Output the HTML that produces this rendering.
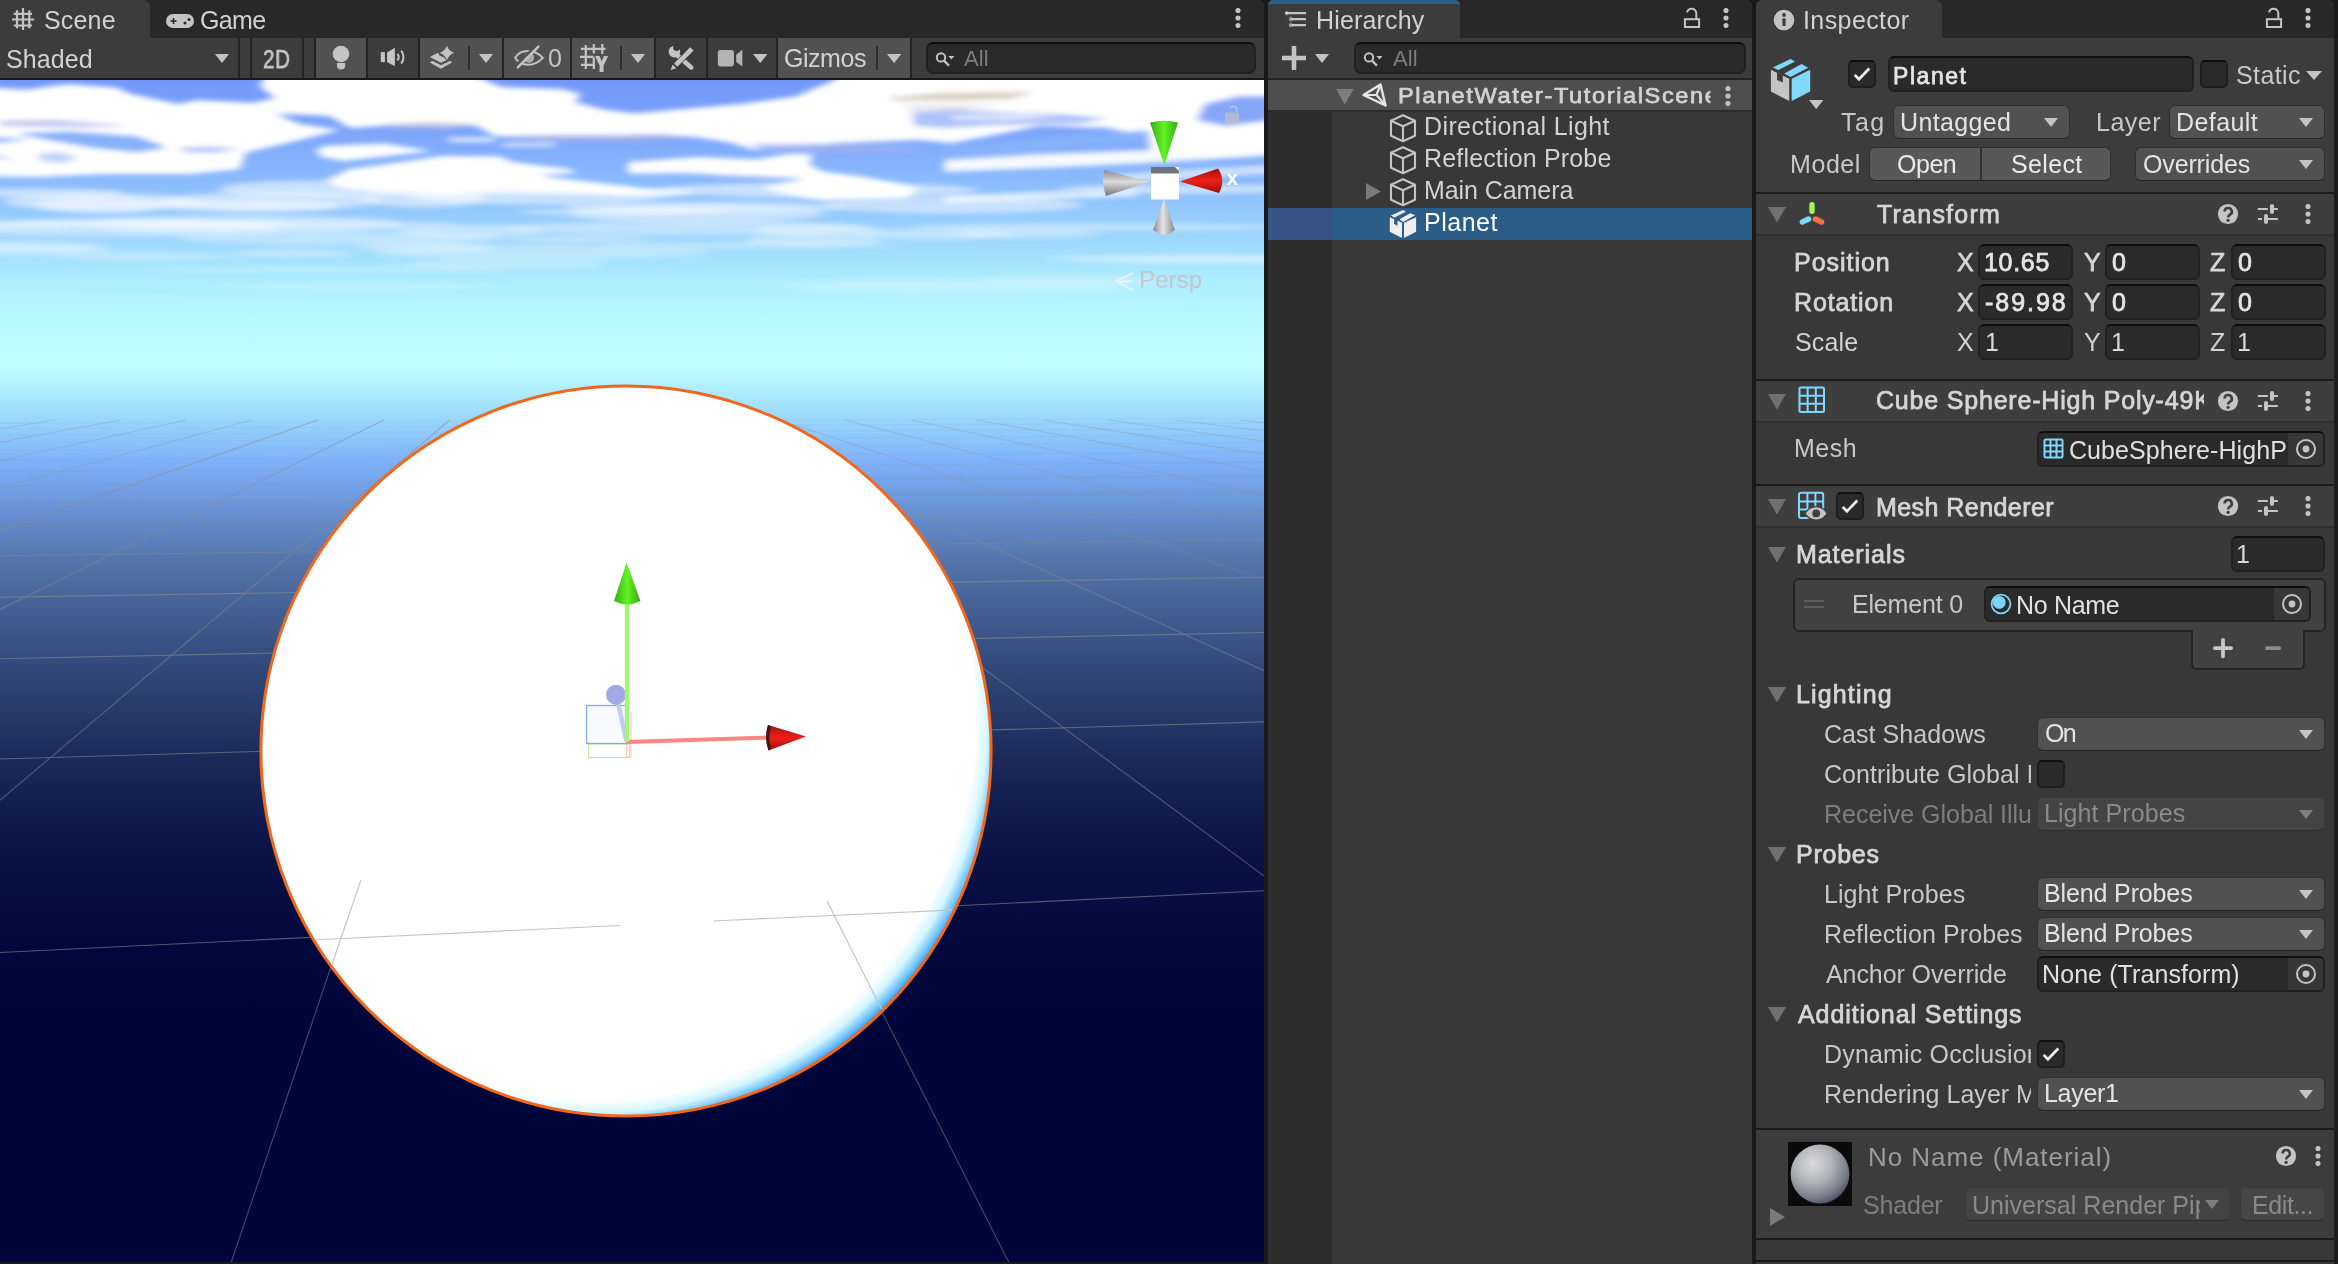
<!DOCTYPE html>
<html><head><meta charset="utf-8"><title>Unity</title>
<style>
html,body{margin:0;padding:0}
body{width:2338px;height:1264px;background:#191919;position:relative;overflow:hidden;font-family:"Liberation Sans",sans-serif;font-size:24px;color:#d2d2d2}
div,span,svg{position:absolute;display:block}
span{white-space:nowrap;will-change:transform}
</style></head><body>
<div style="left:0px;top:0px;width:1264px;height:38px;background:#282828;border-radius:0 5px 0 0;"></div>
<div style="left:0px;top:0px;width:150px;height:38px;background:#3c3c3c;border-top-right-radius:7px;"></div>
<svg style="left:10px;top:6px;" width="26" height="26" viewBox="0 0 26 26"><g stroke="#c4c4c4" stroke-width="2.2"><path d="M7 4.3V22.3M13 1.9V24M19.3 4.3V22.3M3.7 7.8H22M2 13.5H24.2M3.7 19.5H22"/></g></svg>
<span style="left:44.30px;top:5px;line-height:31px;font-size:25px;color:#d2d2d2;letter-spacing:0.175px;">Scene</span>
<svg style="left:164px;top:12px;" width="32" height="18" viewBox="0 0 32 18"><rect x="2" y="2" width="28" height="14" rx="7" fill="#c4c4c4"/><path d="M6.5 9H12.5M9.5 6V12" stroke="#282828" stroke-width="1.6"/><circle cx="21" cy="11" r="1.5" fill="#282828"/><circle cx="25" cy="7.5" r="1.5" fill="#282828"/></svg>
<span style="left:199.75px;top:5px;line-height:31px;font-size:25px;color:#d2d2d2;letter-spacing:-0.667px;">Game</span>
<svg style="left:1234px;top:8px;" width="8" height="20" viewBox="0 0 8 20"><circle cx="4" cy="2.5" r="2.55" fill="#c4c4c4"/><circle cx="4" cy="10.0" r="2.55" fill="#c4c4c4"/><circle cx="4" cy="17.5" r="2.55" fill="#c4c4c4"/></svg>
<div style="left:0px;top:38px;width:1264px;height:40px;background:#3c3c3c;"></div>
<div style="left:0px;top:78px;width:1264px;height:2px;background:#191919;"></div>
<span style="left:6.30px;top:44px;line-height:31px;font-size:25px;color:#d2d2d2;letter-spacing:0.090px;">Shaded</span>
<svg style="left:215.0px;top:54.0px;" width="14" height="9" viewBox="0 0 14 9"><path d="M0 0H14L7.0 9Z" fill="#c4c4c4"/></svg>
<div style="left:238px;top:38px;width:2px;height:40px;background:#232323;"></div>
<div style="left:250px;top:38px;width:2px;height:40px;background:#232323;"></div>
<div style="left:302px;top:38px;width:2px;height:40px;background:#232323;"></div>
<div style="left:314px;top:38px;width:2px;height:40px;background:#232323;"></div>
<div style="left:366px;top:38px;width:2px;height:40px;background:#232323;"></div>
<div style="left:418px;top:38px;width:2px;height:40px;background:#232323;"></div>
<div style="left:502px;top:38px;width:2px;height:40px;background:#232323;"></div>
<div style="left:570px;top:38px;width:2px;height:40px;background:#232323;"></div>
<div style="left:654px;top:38px;width:2px;height:40px;background:#232323;"></div>
<div style="left:706px;top:38px;width:2px;height:40px;background:#232323;"></div>
<div style="left:776px;top:38px;width:2px;height:40px;background:#232323;"></div>
<div style="left:910px;top:38px;width:2px;height:40px;background:#232323;"></div>
<div style="left:316px;top:38px;width:50px;height:40px;background:#515151;"></div>
<div style="left:420px;top:38px;width:82px;height:40px;background:#515151;"></div>
<div style="left:504px;top:38px;width:66px;height:40px;background:#515151;"></div>
<div style="left:572px;top:38px;width:82px;height:40px;background:#515151;"></div>
<div style="left:778px;top:38px;width:132px;height:40px;background:#515151;"></div>
<span style="left:262.98px;top:44px;line-height:31px;font-size:25px;color:#c4c4c4;letter-spacing:0.738px;-webkit-text-stroke:0.75px #c4c4c4;transform:scaleX(0.82);transform-origin:0 0;">2D</span>
<svg style="left:328px;top:42px;" width="26" height="32" viewBox="0 0 26 32"><circle cx="13" cy="12" r="8.3" fill="#c4c4c4"/><path d="M9 21h8.2v2.4a4.1 4.1 0 0 1-8.2 0z" fill="#c4c4c4"/></svg>
<svg style="left:378px;top:44px;" width="30" height="28" viewBox="0 0 30 28"><g fill="#c4c4c4"><rect x="2.8" y="8.1" width="4.1" height="10.1"/><path d="M9 8.5L16.9 3.8V22.2L9 18Z"/></g><g fill="none" stroke="#c4c4c4" stroke-width="2"><path d="M19.4 9.8a5.2 5.2 0 0 1 0 6.6"/><path d="M23.2 6.6a10.4 10.4 0 0 1 0 13"/></g></svg>
<svg style="left:428px;top:44px;" width="30" height="28" viewBox="0 0 30 28"><g fill="#c4c4c4"><path d="M1.8 18.4L4.6 17 13 21.2 21.6 17 24.4 18.3 13 24.8Z"/><path d="M1.8 13L10.4 8.4 11.4 11.6 16.6 13.8 19 16 13 18.8Z"/><path d="M18.9 1.6Q20.6 7.3 26.3 9Q20.6 10.7 18.9 16.4Q17.2 10.7 11.5 9Q17.2 7.3 18.9 1.6Z" stroke="#515151" stroke-width="1.6" paint-order="stroke"/></g></svg>
<div style="left:468px;top:46px;width:2px;height:24px;background:#2e2e2e;"></div>
<svg style="left:479.0px;top:54.0px;" width="14" height="9" viewBox="0 0 14 9"><path d="M0 0H14L7.0 9Z" fill="#c4c4c4"/></svg>
<svg style="left:512px;top:44px;" width="34" height="28" viewBox="0 0 34 28"><path d="M3.2 13.8C8.5 4.6 22.5 4.6 30.8 13.8C22.5 23 8.5 23 3.2 13.8Z" fill="none" stroke="#c4c4c4" stroke-width="2"/><circle cx="17" cy="13.6" r="5.2" fill="#a8a8a8"/><path d="M3.6 22.4L25.4 .6" stroke="#515151" stroke-width="3"/><path d="M5.8 23.4L26.4 2.6" stroke="#c4c4c4" stroke-width="2.5" stroke-linecap="round"/></svg>
<span style="left:547.75px;top:43px;line-height:31px;font-size:25px;color:#c4c4c4;letter-spacing:0.000px;">0</span>
<svg style="left:578px;top:42px;" width="34" height="34" viewBox="0 0 34 34"><g stroke="#c4c4c4" stroke-width="2.2"><path d="M7.8 3V27M15.8 2V11.4M15.8 15.5V27M24.3 2V12M3 6.8H27.5M2 14.8H15.5M3 22.8H17"/></g><path d="M17 14H21.6L23.7 19.4 25.8 14H30.2L25.6 23.6V30H21.6V23.6Z" fill="#c4c4c4" stroke="#515151" stroke-width="1.4" paint-order="stroke"/></svg>
<div style="left:620px;top:46px;width:2px;height:24px;background:#2e2e2e;"></div>
<svg style="left:631.0px;top:54.0px;" width="14" height="9" viewBox="0 0 14 9"><path d="M0 0H14L7.0 9Z" fill="#c4c4c4"/></svg>
<svg style="left:666px;top:44px;" width="30" height="30" viewBox="0 0 30 30"><path d="M11.5 11.5L25.2 23.4" stroke="#c4c4c4" stroke-width="4.6" stroke-linecap="round"/><circle cx="8.4" cy="7.6" r="5.8" fill="#c4c4c4"/><circle cx="10.6" cy="3.6" r="3.4" fill="#3c3c3c"/><path d="M24.2 3.2L27.6 6.6 11.4 22.8 8 19.4Z" fill="#c4c4c4" stroke="#3c3c3c" stroke-width="1.2" paint-order="stroke"/><path d="M4.6 26L6.6 20.4 10.4 24.2Z" fill="#c4c4c4"/></svg>
<svg style="left:716px;top:46px;" width="30" height="26" viewBox="0 0 30 26"><rect x="1.8" y="4" width="16.2" height="16.4" rx="2.4" fill="#b4b4b4"/><path d="M20.2 8.7L26.3 3.7V20.4L20.2 15.9Z" fill="#b4b4b4"/></svg>
<svg style="left:752.75px;top:53.95px;" width="14.5" height="9.1" viewBox="0 0 14.5 9.1"><path d="M0 0H14.5L7.25 9.1Z" fill="#c4c4c4"/></svg>
<span style="left:783.85px;top:43px;line-height:31px;font-size:25px;color:#d2d2d2;letter-spacing:-0.470px;">Gizmos</span>
<div style="left:876px;top:46px;width:2px;height:24px;background:#2e2e2e;"></div>
<svg style="left:886.9px;top:53.95px;" width="14.2" height="9.1" viewBox="0 0 14.2 9.1"><path d="M0 0H14.2L7.1 9.1Z" fill="#c4c4c4"/></svg>
<div style="left:926px;top:42px;width:330px;height:32px;background:#2a2a2a;border:2px solid #212121;border-top-color:#0e0e0e;border-radius:7px;box-sizing:border-box;"></div>
<svg style="left:932.5px;top:50px;" width="22" height="18" viewBox="0 0 22 18"><circle cx="8" cy="7.4" r="4.2" fill="none" stroke="#c4c4c4" stroke-width="2"/><path d="M11 10.6L16 15.6" stroke="#c4c4c4" stroke-width="2.2"/><path d="M15.4 6H21.4L18.4 9.6Z" fill="#c4c4c4"/></svg>
<span style="left:964.30px;top:45px;line-height:28px;font-size:22px;color:#7d7d7d;letter-spacing:0.150px;">All</span>
<svg style="left:0;top:80px" width="1264" height="1182" viewBox="0 80 1264 1182"><defs><linearGradient id="sky" x1="0" y1="0" x2="0" y2="1"><stop offset="0.0000" stop-color="#7398fa"/><stop offset="0.0423" stop-color="#7ca4fb"/><stop offset="0.0846" stop-color="#8abafc"/><stop offset="0.1269" stop-color="#9ad2fd"/><stop offset="0.1692" stop-color="#acecfe"/><stop offset="0.2030" stop-color="#b8fafd"/><stop offset="0.2420" stop-color="#c2fefe"/><stop offset="0.2580" stop-color="#b2f2fe"/><stop offset="0.2817" stop-color="#9edcfc"/><stop offset="0.3046" stop-color="#8cc4fc"/><stop offset="0.3215" stop-color="#80b2f9"/><stop offset="0.3426" stop-color="#74a2e8"/><stop offset="0.3663" stop-color="#6690d2"/><stop offset="0.4086" stop-color="#5474a8"/><stop offset="0.4509" stop-color="#425e92"/><stop offset="0.4932" stop-color="#344a7c"/><stop offset="0.5245" stop-color="#2a3e6e"/><stop offset="0.5711" stop-color="#1c2a5a"/><stop offset="0.6523" stop-color="#0a1246"/><stop offset="0.7327" stop-color="#02083c"/><stop offset="0.7868" stop-color="#00063a"/><stop offset="1.0000" stop-color="#00053a"/></linearGradient><filter id="b6" x="-10%" y="-30%" width="120%" height="160%"><feGaussianBlur stdDeviation="4 2.4"/></filter><filter id="b3" x="-10%" y="-30%" width="120%" height="160%"><feGaussianBlur stdDeviation="6 2.4"/></filter><radialGradient id="sph" gradientUnits="userSpaceOnUse" cx="595" cy="720" r="410"><stop offset="0" stop-color="#fff"/><stop offset="0.928" stop-color="#fff"/><stop offset="0.958" stop-color="#d4f6ff"/><stop offset="0.984" stop-color="#6cc0fa"/><stop offset="1" stop-color="#1c8cf0"/></radialGradient><linearGradient id="gc" x1="0" y1="0" x2="1" y2="0"><stop offset="0" stop-color="#8a8a8a"/><stop offset=".45" stop-color="#e4e4e4"/><stop offset="1" stop-color="#8a8a8a"/></linearGradient><linearGradient id="gcv" x1="0" y1="0" x2="0" y2="1"><stop offset="0" stop-color="#8a8a8a"/><stop offset=".45" stop-color="#dcdcdc"/><stop offset="1" stop-color="#777"/></linearGradient><linearGradient id="gg" x1="0" y1="0" x2="1" y2="0"><stop offset="0" stop-color="#38ac12"/><stop offset=".5" stop-color="#62f424"/><stop offset="1" stop-color="#36a812"/></linearGradient><linearGradient id="gr" x1="0" y1="0" x2="0" y2="1"><stop offset="0" stop-color="#a01008"/><stop offset=".5" stop-color="#f02018"/><stop offset="1" stop-color="#981008"/></linearGradient><clipPath id="cv"><rect x="0" y="80" width="1264" height="1182"/></clipPath></defs><rect x="0" y="80" width="1264" height="1182" fill="url(#sky)"/><g filter="url(#b6)" clip-path="url(#cv)"><path d="M-20 87 L27 89.6 L68 84 L116 87.5 L131 94 L178 104 L198 100 L253 103 L275 98 L260 87 L266 70 L462 70 L501 87 L562 89 L581 94 L575 102 L603 109.5 L636 113.5 L673 110 L741 104 L796 96.5 L815 88 L830 82.5 L846 70 L1290 70 L1290 96 L1240 96 L1205 104 L1197 120 L1225 126 L1290 118 L1290 150 L1230 156 L1150 152 L1149 137 L1108 128 L1040 126 L952 143 L919 140 L837 143 L755 150 L728 142 L694 137 L632 135 L603 136 L560 137 L494 136 L477 126 L405 124 L353 128 L346 126 L330 116 L300 114.5 L276 114 L300 124 L320 127 L340 130 L300 140 L246 152.5 L240 169 L190 174 L100 174 L40 177 L-20 176 L-20 157 L18 159 L-20 154 L-20 144 L30 139.5 L-20 137Z" fill="#ffffff" /><path d="M20 133 L68 131 L137 136 L164 146 L164 148.5 L137 152.5 L96 148.5 L55 141.5 L20 134.5Z" fill="#86b2fb" /><path d="M0 120.8 L55 120 L130 126 L90 127 L40 126.5 L0 125.8Z" fill="#b0b8f0" opacity=".85"/><path d="M38 154 L60 152 L78 157 L64 163.5 L40 161Z" fill="#a8c2fb" opacity=".7"/><path d="M178 148 L210 146.5 L240 149 L215 152.5 L185 152Z" fill="#98a8f4" opacity=".75"/><path d="M384 124.5 L430 122 L477 124 L450 128.5 L395 128Z" fill="#c8c4dc" opacity=".8"/><path d="M494 136.5 L560 134.5 L640 135 L694 137 L640 140.5 L540 140.5Z" fill="#b2b6e4" opacity=".8"/><path d="M446 138 L494 138 L494 141.5 L452 141.5Z" fill="#ffffff" /><path d="M500 143.5 L555 143 L555 146 L505 146.5Z" fill="#ffffff" opacity=".9"/><path d="M324 146 L384 143.6 L432 151 L384 156.6 L343 161 L320 156.6 L316 150Z" fill="#ffffff" /><path d="M325 181 L350 169 L382 165 L443 156 L501 156.6 L512 162 L569 169 L576 173 L540 175 L560 178.5 L631 187 L660 192 L636 196 L560 193 L508 190.5 L440 195 L380 192 L340 188Z" fill="#ffffff" /><path d="M628 162 L700 157 L755 159.4 L789 154 L812 154 L810 165 L823.6 171.7 L864.7 177 L905.7 185.4 L919.4 189.5 L905.7 197.7 L823.6 200.4 L782.6 193.6 L762 188 L803 179.5 L760 177 L714 174.6 L686 173 L628 173.5Z" fill="#ffffff" /><path d="M714 175 L760 176 L803 178.5 L770 181 L730 180Z" fill="#9cb4f8" opacity=".7"/><path d="M628 188.5 L670 189 L700 192 L670 196 L628 195.5Z" fill="#ffffff" opacity=".85"/><path d="M751 143.5 L820 144 L880 146 L933 148 L900 152.5 L820 152 L760 150Z" fill="#a4b0f0" opacity=".75"/><path d="M632 134.5 L660 133.8 L694 137 L660 140 L632 140Z" fill="#a8b0ec" opacity=".8"/><path d="M889 97.5 L944 93 L1033 92 L1010 99 L950 100.5 L895 100.5Z" fill="#cfc4b0" opacity=".85"/><path d="M903 106 L960 104.6 L1000 106 L960 110 L910 110Z" fill="#d8d0d8" opacity=".6"/><path d="M912.6 112 L952 110 L1000 112 L1060 114 L1108 118 L1080 124 L1000 125 L944 128 L914 126Z" fill="#8aa8f6" opacity=".7"/><path d="M950 116 L1020 114.5 L1060 116.5 L1010 119.5 L955 119.5Z" fill="#ffffff" opacity=".75"/><path d="M1205 104 L1240 96 L1290 96 L1290 118 L1225 126 L1197 120Z" fill="#88a8f8" opacity=".85"/><path d="M971 146 L1040 138 L1149 130 L1149 140 L1060 148 L990 155 L944 157 L944 148Z" fill="#86b2fb" opacity=".9"/><path d="M944 160 L1040 154 L1150 150 L1264 140 L1290 138 L1290 152 L1264 156 L1150 163 L1040 168 L944 172Z" fill="#ffffff" opacity=".93"/><path d="M1100 176 L1180 170 L1290 164 L1290 172 L1200 178 L1120 182Z" fill="#ffffff" opacity=".6"/><path d="M944 196 L1040 192 L1136 190 L1136 196 L1040 200 L944 203Z" fill="#ffffff" opacity=".7"/></g><g filter="url(#b3)" clip-path="url(#cv)" fill="#fff"><ellipse cx="146" cy="223" rx="145" ry="3.5" opacity="0.41"/><ellipse cx="425" cy="247" rx="68" ry="5.3" opacity="0.32"/><ellipse cx="514" cy="190" rx="69" ry="4.2" opacity="0.53"/><ellipse cx="1025" cy="234" rx="76" ry="4.1" opacity="0.36"/><ellipse cx="1182" cy="258" rx="135" ry="4.4" opacity="0.27"/><ellipse cx="11" cy="297" rx="172" ry="2.9" opacity="0.12"/><ellipse cx="103" cy="202" rx="100" ry="8.8" opacity="0.49"/><ellipse cx="706" cy="207" rx="143" ry="5.7" opacity="0.47"/><ellipse cx="32" cy="248" rx="68" ry="3.7" opacity="0.31"/><ellipse cx="506" cy="264" rx="101" ry="5.2" opacity="0.25"/><ellipse cx="340" cy="238" rx="163" ry="6.7" opacity="0.35"/><ellipse cx="697" cy="214" rx="128" ry="8.7" opacity="0.44"/><ellipse cx="324" cy="269" rx="187" ry="2.8" opacity="0.23"/><ellipse cx="934" cy="234" rx="80" ry="5.6" opacity="0.37"/><ellipse cx="819" cy="190" rx="159" ry="7.6" opacity="0.53"/><ellipse cx="358" cy="286" rx="150" ry="4.4" opacity="0.17"/><ellipse cx="543" cy="252" rx="169" ry="7.4" opacity="0.30"/><ellipse cx="813" cy="240" rx="68" ry="6.6" opacity="0.34"/><ellipse cx="1241" cy="260" rx="167" ry="3.8" opacity="0.27"/><ellipse cx="819" cy="230" rx="63" ry="5.6" opacity="0.38"/><ellipse cx="102" cy="205" rx="68" ry="8.4" opacity="0.48"/><ellipse cx="272" cy="201" rx="111" ry="9.2" opacity="0.49"/><ellipse cx="534" cy="195" rx="131" ry="9.6" opacity="0.51"/><ellipse cx="1073" cy="279" rx="96" ry="3.9" opacity="0.19"/><ellipse cx="1099" cy="227" rx="185" ry="3.8" opacity="0.39"/><ellipse cx="252" cy="206" rx="90" ry="6.5" opacity="0.47"/><ellipse cx="292" cy="253" rx="61" ry="4.7" opacity="0.29"/><ellipse cx="686" cy="228" rx="184" ry="7.0" opacity="0.39"/><ellipse cx="753" cy="245" rx="148" ry="3.0" opacity="0.32"/><ellipse cx="964" cy="289" rx="174" ry="5.1" opacity="0.16"/><ellipse cx="469" cy="231" rx="73" ry="6.6" opacity="0.38"/><ellipse cx="38" cy="193" rx="87" ry="4.6" opacity="0.52"/><ellipse cx="18" cy="225" rx="60" ry="3.9" opacity="0.40"/><ellipse cx="423" cy="198" rx="63" ry="9.4" opacity="0.51"/><ellipse cx="143" cy="256" rx="93" ry="4.2" opacity="0.28"/><ellipse cx="110" cy="228" rx="170" ry="8.8" opacity="0.39"/><ellipse cx="579" cy="239" rx="71" ry="3.3" opacity="0.35"/><ellipse cx="294" cy="225" rx="168" ry="3.9" opacity="0.40"/><ellipse cx="1186" cy="189" rx="129" ry="4.6" opacity="0.54"/><ellipse cx="-15" cy="248" rx="129" ry="7.8" opacity="0.31"/><ellipse cx="855" cy="284" rx="94" ry="3.5" opacity="0.17"/><ellipse cx="954" cy="205" rx="129" ry="8.4" opacity="0.48"/><ellipse cx="240" cy="224" rx="165" ry="8.9" opacity="0.41"/><ellipse cx="998" cy="283" rx="166" ry="5.1" opacity="0.18"/><ellipse cx="623" cy="212" rx="106" ry="3.4" opacity="0.45"/><ellipse cx="313" cy="189" rx="94" ry="8.5" opacity="0.54"/></g><g stroke="#8c8c8c" stroke-width="1.1" opacity=".6" clip-path="url(#cv)"><path d="M0 952.5L1264 890.8" opacity="1.00"/><path d="M0 759.0L1264 721.9" opacity="1.00"/><path d="M0 658.7L1264 632.5" opacity="1.00"/><path d="M0 597.2L1264 577.2" opacity="1.00"/><path d="M0 555.8L1264 539.6" opacity="0.79"/><path d="M0 525.9L1264 512.3" opacity="0.60"/><path d="M0 503.3L1264 491.7" opacity="0.46"/><path d="M0 485.7L1264 475.5" opacity="0.35"/><path d="M0 471.6L1264 462.5" opacity="0.26"/><path d="M0 460.0L1264 451.7" opacity="0.19"/><path d="M0 450.2L1264 442.8" opacity="0.15"/><path d="M0 442.0L1264 435.2" opacity="0.15"/><path d="M0 435.0L1264 428.6" opacity="0.15"/><path d="M0 428.8L1264 423.0" opacity="0.15"/><path d="M0 423.4L1264 418.0" opacity="0.15"/><path d="M-77.5 420L-6765.3 1262" opacity="0.5"/><path d="M-11.6 420L-5987.9 1262" opacity="0.5"/><path d="M54.3 420L-5210.5 1262" opacity="0.5"/><path d="M120.2 420L-4433.1 1262" opacity="0.5"/><path d="M186.1 420L-3655.7 1262" opacity="0.5"/><path d="M252.0 420L-2878.3 1262" opacity="0.5"/><path d="M317.9 420L-2100.9 1262" opacity="0.85"/><path d="M383.8 420L-1323.5 1262" opacity="0.85"/><path d="M449.7 420L-546.1 1262" opacity="0.85"/><path d="M515.7 420L231.3 1262" opacity="0.85"/><path d="M581.6 420L1008.7 1262" opacity="0.85"/><path d="M647.5 420L1786.1 1262" opacity="0.85"/><path d="M713.4 420L2563.5 1262" opacity="0.85"/><path d="M779.3 420L3340.9 1262" opacity="0.5"/><path d="M845.2 420L4118.3 1262" opacity="0.5"/><path d="M911.1 420L4895.7 1262" opacity="0.5"/><path d="M977.0 420L5673.1 1262" opacity="0.5"/><path d="M1042.9 420L6450.5 1262" opacity="0.5"/><path d="M1108.8 420L7227.9 1262" opacity="0.5"/><path d="M1174.8 420L8005.3 1262" opacity="0.5"/><path d="M1240.7 420L8782.7 1262" opacity="0.5"/></g><circle cx="626" cy="751" r="365.5" fill="url(#sph)"/><circle cx="626" cy="751" r="365.1" fill="none" stroke="#f2671c" stroke-width="3"/><clipPath id="cs"><circle cx="626" cy="751" r="363"/></clipPath><g stroke="#c4c4c4" stroke-width="1.2" fill="none" clip-path="url(#cs)"><path d="M300 940.5L620 925.5M713 921L962 909.5M361 880L330 970M827 901L892 1030"/></g><rect x="588.5" y="744" width="41" height="13.5" fill="#fcfffa" stroke="#bfe6ae" stroke-width="1.2"/><rect x="626.5" y="713" width="4.5" height="44" fill="none" stroke="#f8c4c4" stroke-width="1"/><rect x="586.5" y="705.5" width="40" height="38" fill="#f8faff" stroke="#88a8f0" stroke-width="1.3"/><path d="M617 698L626.5 741" stroke="#c2caf8" stroke-width="4.5"/><circle cx="616" cy="694.8" r="10" fill="#a0a8e6"/><path d="M627 742L770 737.4" stroke="#ff8484" stroke-width="4"/><path d="M627 742V603" stroke="#a2f672" stroke-width="4.4"/><path d="M626.6 562.5L614 601Q627 608 640.4 601Z" fill="url(#gg)"/><path d="M768 725Q764 737.5 768.5 750.5L806 736.6Z" fill="url(#gr)"/><path d="M768 725Q764 737.5 768.5 750.5L771 749Q767.5 737 771 726.5Z" fill="#3a1818"/><path d="M1150 122.5Q1164 119 1178 122.5L1164.3 165Z" fill="url(#gg)"/><path d="M1104.5 170Q1101 183 1106 196L1149 182Z" fill="url(#gcv)"/><path d="M1164 199L1153 230Q1164 239 1175 230Z" fill="url(#gc)"/><path d="M1180 181.5L1218 168.5Q1226 180 1219 193Z" fill="url(#gr)"/><rect x="1151" y="167" width="28" height="32.5" fill="#fff"/><path d="M1151 167H1175L1179 171V173.5H1151Z" fill="#70747c"/><text x="1226.5" y="184.5" font-family="Liberation Sans,sans-serif" font-weight="bold" font-size="21" fill="#fff">x</text><g opacity=".8"><rect x="1225" y="112.5" width="14" height="11" fill="#bcc0cc"/><path d="M1236.6 112V109.6a3.3 3.3 0 0 0-6.3-1.3" fill="none" stroke="#d8d8e0" stroke-width="1.5" opacity=".7"/></g><path d="M1133 273L1115.5 281.5 1133 290M1116 281.5H1132" fill="none" stroke="#eef4f8" stroke-width="1.8" opacity=".85"/><text x="1139.0" y="288.4" font-family="Liberation Sans,sans-serif" font-size="24" letter-spacing="0.12" fill="#c9c2c6" opacity=".9">Persp</text></svg>
<div style="left:0px;top:1262px;width:1264px;height:2px;background:#1b1b1b;"></div>
<div style="left:1268px;top:0px;width:484px;height:38px;background:#282828;border-radius:5px 5px 0 0;"></div>
<div style="left:1268px;top:38px;width:484px;height:1226px;background:#383838;"></div>
<div style="left:1268px;top:0px;width:192px;height:38px;background:#3c3c3c;border-top-left-radius:5px;border-top-right-radius:5px;border-top:4px solid #2c5d87;box-sizing:border-box;"></div>
<svg style="left:1282px;top:9px;" width="26" height="22" viewBox="0 0 26 22"><g stroke="#c4c4c4" stroke-width="2.2"><path d="M5 4.1H24M9 10.1H24M9 16.1H24"/></g><g fill="#dcdcdc"><rect x="3.2" y="2.6" width="3" height="3"/><rect x="7.4" y="8.6" width="3" height="3"/><rect x="7.4" y="14.6" width="3" height="3"/></g><path d="M4.7 5V7.5M8.9 7V18.5" stroke="#777" stroke-width="1" fill="none"/></svg>
<span style="left:1315.60px;top:5px;line-height:31px;font-size:25px;color:#d2d2d2;letter-spacing:0.175px;">Hierarchy</span>
<svg style="left:1682px;top:7px;" width="20" height="22" viewBox="0 0 20 22"><rect x="2.9" y="12.2" width="14.2" height="7.8" fill="none" stroke="#c4c4c4" stroke-width="2"/><path d="M14.3 12V6.5a4.7 4.7 0 0 0-9.3-1.1" fill="none" stroke="#c4c4c4" stroke-width="2"/></svg>
<svg style="left:1722px;top:8px;" width="8" height="20" viewBox="0 0 8 20"><circle cx="4" cy="2.5" r="2.55" fill="#c4c4c4"/><circle cx="4" cy="10.0" r="2.55" fill="#c4c4c4"/><circle cx="4" cy="17.5" r="2.55" fill="#c4c4c4"/></svg>
<div style="left:1268px;top:38px;width:484px;height:40px;background:#3c3c3c;"></div>
<div style="left:1268px;top:78px;width:484px;height:2px;background:#232323;"></div>
<svg style="left:1281px;top:45px;" width="26" height="26" viewBox="0 0 26 26"><path d="M13 1V25M1 13H25" stroke="#c4c4c4" stroke-width="4.6"/></svg>
<svg style="left:1315.0px;top:54.0px;" width="14" height="9" viewBox="0 0 14 9"><path d="M0 0H14L7.0 9Z" fill="#c4c4c4"/></svg>
<div style="left:1354px;top:42px;width:392px;height:32px;background:#2a2a2a;border:2px solid #212121;border-top-color:#0e0e0e;border-radius:7px;box-sizing:border-box;"></div>
<svg style="left:1360.5px;top:50px;" width="22" height="18" viewBox="0 0 22 18"><circle cx="8" cy="7.4" r="4.2" fill="none" stroke="#c4c4c4" stroke-width="2"/><path d="M11 10.6L16 15.6" stroke="#c4c4c4" stroke-width="2.2"/><path d="M15.4 6H21.4L18.4 9.6Z" fill="#c4c4c4"/></svg>
<span style="left:1392.80px;top:45px;line-height:28px;font-size:22px;color:#7d7d7d;letter-spacing:0.150px;">All</span>
<div style="left:1268px;top:112px;width:64px;height:1152px;background:#2d2d2d;"></div>
<div style="left:1268px;top:80px;width:484px;height:30px;background:#4e4e4e;"></div>
<div style="left:1268px;top:110px;width:484px;height:2px;background:#2a2a2a;"></div>
<svg style="left:1336.25px;top:89.05px;" width="17.5" height="15.5" viewBox="0 0 17.5 15.5"><path d="M0 0H17.5L8.75 15.5Z" fill="#7e7e7e"/></svg>
<svg style="left:1361px;top:82px;" width="28" height="26" viewBox="0 0 28 26"><g fill="none" stroke="#e6e6e6" stroke-width="2.4" stroke-linejoin="round"><path d="M2.5 13L19.5 2.5 24.5 23.5Z"/><path d="M15.5 13L2.5 13M15.5 13L19.5 2.5M15.5 13L24.5 23.5" stroke-width="2.2"/></g></svg>
<span style="left:1397.73px;top:82px;line-height:28px;font-size:22px;color:#d2d2d2;letter-spacing:1.517px;-webkit-text-stroke:0.75px #d2d2d2;transform:scaleX(1.07);transform-origin:0 0;width:291.84px;overflow:hidden;">PlanetWater-TutorialScene</span>
<svg style="left:1724px;top:86px;" width="8" height="20" viewBox="0 0 8 20"><circle cx="4" cy="2.5" r="2.55" fill="#c4c4c4"/><circle cx="4" cy="10.0" r="2.55" fill="#c4c4c4"/><circle cx="4" cy="17.5" r="2.55" fill="#c4c4c4"/></svg>
<svg style="left:1389px;top:113.0px;" width="28" height="30" viewBox="0 0 28 30"><g fill="none" stroke="#c4c4c4" stroke-width="2.1" stroke-linejoin="round"><path d="M14 2.3L26 7.8V22.8L14 28.2 2 22.8V7.8Z"/><path d="M2 7.8L14 13.3 26 7.8M14 13.3V28.2"/></g></svg>
<span style="left:1424.00px;top:111px;line-height:31px;font-size:25px;color:#d2d2d2;letter-spacing:0.391px;">Directional Light</span>
<svg style="left:1389px;top:145.0px;" width="28" height="30" viewBox="0 0 28 30"><g fill="none" stroke="#c4c4c4" stroke-width="2.1" stroke-linejoin="round"><path d="M14 2.3L26 7.8V22.8L14 28.2 2 22.8V7.8Z"/><path d="M2 7.8L14 13.3 26 7.8M14 13.3V28.2"/></g></svg>
<span style="left:1424.00px;top:143px;line-height:31px;font-size:25px;color:#d2d2d2;letter-spacing:0.167px;">Reflection Probe</span>
<svg style="left:1389px;top:177.0px;" width="28" height="30" viewBox="0 0 28 30"><g fill="none" stroke="#c4c4c4" stroke-width="2.1" stroke-linejoin="round"><path d="M14 2.3L26 7.8V22.8L14 28.2 2 22.8V7.8Z"/><path d="M2 7.8L14 13.3 26 7.8M14 13.3V28.2"/></g></svg>
<span style="left:1424.00px;top:175px;line-height:31px;font-size:25px;color:#d2d2d2;letter-spacing:-0.075px;">Main Camera</span>
<svg style="left:1366.0px;top:183.0px;" width="15" height="17" viewBox="0 0 15 17"><path d="M0 0V17L15 8.5Z" fill="#7a7a7a"/></svg>
<div style="left:1268px;top:208px;width:64px;height:32px;background:#375485;"></div>
<div style="left:1332px;top:208px;width:420px;height:32px;background:#2c5d87;"></div>
<svg style="left:1389px;top:208px;" width="28" height="31" viewBox="0 0 28 31"><g fill="#efefef"><path d="M.8 9.3L13 14.8V30L.8 23.8Z"/><path d="M15 14.8L27.1 9.3V23.8L15 30Z"/><path d="M1.9 7.5L14.1 2 16.9 3.7 5.5 9.5Z"/><path d="M10.5 11.2L21.4 5.2 26.1 7.3 14.1 14Z"/></g><path d="M5.1 10.6V15.9L8.5 17.8V12.2Z" fill="#2c5d87"/></svg>
<span style="left:1424.00px;top:207px;line-height:31px;font-size:25px;color:#ffffff;letter-spacing:0.500px;">Planet</span>
<div style="left:1264px;top:0px;width:4px;height:1264px;background:#191919;"></div>
<div style="left:1752px;top:0px;width:4px;height:1264px;background:#191919;"></div>
<div style="left:1756px;top:0px;width:578px;height:38px;background:#282828;border-radius:5px 5px 0 0;"></div>
<div style="left:1756px;top:38px;width:578px;height:1226px;background:#383838;"></div>
<div style="left:2334px;top:38px;width:4px;height:1226px;background:#1d1d1d;"></div>
<div style="left:1756px;top:0px;width:186px;height:38px;background:#3c3c3c;border-top-left-radius:7px;border-top-right-radius:7px;"></div>
<svg style="left:1773px;top:9px;" width="22" height="22" viewBox="0 0 22 22"><circle cx="11" cy="11" r="10.3" fill="#c4c4c4"/><rect x="9.4" y="9.4" width="3.2" height="7.6" fill="#3c3c3c"/><circle cx="11" cy="6" r="1.9" fill="#3c3c3c"/></svg>
<span style="left:1802.75px;top:5px;line-height:31px;font-size:25px;color:#d2d2d2;letter-spacing:0.406px;">Inspector</span>
<svg style="left:2264px;top:7px;" width="20" height="22" viewBox="0 0 20 22"><rect x="2.9" y="12.2" width="14.2" height="7.8" fill="none" stroke="#c4c4c4" stroke-width="2"/><path d="M14.3 12V6.5a4.7 4.7 0 0 0-9.3-1.1" fill="none" stroke="#c4c4c4" stroke-width="2"/></svg>
<svg style="left:2304px;top:8px;" width="8" height="20" viewBox="0 0 8 20"><circle cx="4" cy="2.5" r="2.55" fill="#c4c4c4"/><circle cx="4" cy="10.0" r="2.55" fill="#c4c4c4"/><circle cx="4" cy="17.5" r="2.55" fill="#c4c4c4"/></svg>
<div style="left:1756px;top:38px;width:578px;height:154px;background:#3c3c3c;"></div>
<svg style="left:1770px;top:56px;" width="44" height="48" viewBox="0 0 44 48"><path d="M.9 13.7L19.2 22.7V44.9L.9 35.6Z" fill="#c4c4c4"/><path d="M21.7 22.7L40.2 13.7V35.6L21.7 44.9Z" fill="#80d8fb"/><path d="M2.9 11.4L20.5 3 25 5.4 8.3 14Z M14.3 17.6L31.6 8.1 38.2 11.7 20.5 20.9Z" fill="#80d8fb"/><path d="M7.1 16.4V23.9L12.8 26.6V19.2Z" fill="#3c3c3c"/></svg>
<svg style="left:1808.75px;top:100.0px;" width="14.5" height="9" viewBox="0 0 14.5 9"><path d="M0 0H14.5L7.25 9Z" fill="#c4c4c4"/></svg>
<div style="left:1848px;top:60px;width:28px;height:28px;background:#2a2a2a;border:2px solid #1e1e1e;border-top-color:#0e0e0e;border-radius:5px;box-sizing:border-box;"></div>
<svg style="left:1852px;top:65px;" width="20" height="18" viewBox="0 0 20 18"><path d="M2.7 9.9L6.9 14.3 17.3 3.5" fill="none" stroke="#f0f0f0" stroke-width="2.7"/></svg>
<div style="left:1888px;top:56px;width:306px;height:36px;background:#2a2a2a;border:2px solid #212121;border-top-color:#0e0e0e;border-radius:6px;box-sizing:border-box;"></div>
<span style="left:1893.25px;top:62px;line-height:29px;font-size:23px;color:#e4e4e4;letter-spacing:1.550px;-webkit-text-stroke:0.75px #e4e4e4;">Planet</span>
<div style="left:2200px;top:60px;width:28px;height:28px;background:#2a2a2a;border:2px solid #1e1e1e;border-top-color:#0e0e0e;border-radius:5px;box-sizing:border-box;"></div>
<span style="left:2236.00px;top:60px;line-height:31px;font-size:25px;color:#c8c8c8;letter-spacing:0.400px;">Static</span>
<svg style="left:2306.0px;top:70.5px;" width="16" height="9" viewBox="0 0 16 9"><path d="M0 0H16L8.0 9Z" fill="#c4c4c4"/></svg>
<span style="left:1841.20px;top:107px;line-height:31px;font-size:25px;color:#c8c8c8;letter-spacing:1.400px;">Tag</span>
<div style="left:1893px;top:105px;width:177px;height:34px;background:#515151;border:1px solid #303030;border-bottom:1.5px solid #242424;border-radius:6px;box-sizing:border-box;"></div>
<svg style="left:2044.0px;top:118.0px;" width="14" height="9" viewBox="0 0 14 9"><path d="M0 0H14L7.0 9Z" fill="#c4c4c4"/></svg>
<span style="left:1899.95px;top:107px;line-height:31px;font-size:25px;color:#e4e4e4;letter-spacing:0.364px;">Untagged</span>
<span style="left:2095.70px;top:107px;line-height:31px;font-size:25px;color:#c8c8c8;letter-spacing:0.513px;">Layer</span>
<div style="left:2169px;top:105px;width:156px;height:34px;background:#515151;border:1px solid #303030;border-bottom:1.5px solid #242424;border-radius:6px;box-sizing:border-box;"></div>
<svg style="left:2299.0px;top:118.0px;" width="14" height="9" viewBox="0 0 14 9"><path d="M0 0H14L7.0 9Z" fill="#c4c4c4"/></svg>
<span style="left:2175.70px;top:107px;line-height:31px;font-size:25px;color:#e4e4e4;letter-spacing:0.425px;">Default</span>
<span style="left:1789.70px;top:149px;line-height:31px;font-size:25px;color:#c8c8c8;letter-spacing:0.575px;">Model</span>
<div style="left:1869px;top:147px;width:242px;height:34px;background:#585858;border:1px solid #303030;border-bottom:1.5px solid #242424;border-radius:6px;box-sizing:border-box;"></div>
<div style="left:1980px;top:148px;width:2px;height:32px;background:#303030;"></div>
<span style="left:1896.70px;top:149px;line-height:31px;font-size:25px;color:#eaeaea;letter-spacing:-0.483px;">Open</span>
<span style="left:2010.70px;top:149px;line-height:31px;font-size:25px;color:#eaeaea;letter-spacing:0.360px;">Select</span>
<div style="left:2135px;top:147px;width:190px;height:34px;background:#515151;border:1px solid #303030;border-bottom:1.5px solid #242424;border-radius:6px;box-sizing:border-box;"></div>
<svg style="left:2299.0px;top:160.0px;" width="14" height="9" viewBox="0 0 14 9"><path d="M0 0H14L7.0 9Z" fill="#c4c4c4"/></svg>
<span style="left:2142.70px;top:149px;line-height:31px;font-size:25px;color:#e4e4e4;letter-spacing:-0.150px;">Overrides</span>
<div style="left:1756px;top:192px;width:578px;height:2px;background:#1a1a1a;"></div>
<div style="left:1756px;top:194px;width:578px;height:40px;background:#3e3e3e;"></div>
<div style="left:1756px;top:234px;width:578px;height:2px;background:#303030;"></div>
<svg style="left:1768.0px;top:207.0px;" width="18" height="15.6" viewBox="0 0 18 15.6"><path d="M0 0H18L9.0 15.6Z" fill="#707070"/></svg>
<svg style="left:1798px;top:200px;" width="30" height="28" viewBox="0 0 30 28"><g stroke-width="5.4" stroke-linecap="round"><path d="M14 4.8V11.2" stroke="#a8f450"/><path d="M4.4 22L10.6 19" stroke="#7dd8fc"/><path d="M17.4 19L23.6 22" stroke="#f8703c"/></g></svg>
<span style="left:1877.20px;top:199px;line-height:31px;font-size:25px;color:#d6d6d6;letter-spacing:1.225px;-webkit-text-stroke:0.75px #d6d6d6;">Transform</span>
<svg style="left:2217px;top:203px;" width="22" height="22" viewBox="0 0 22 22"><circle cx="11" cy="11" r="10.1" fill="#c4c4c4"/><path d="M7.6 8.6a3.6 3.6 0 1 1 5.4 3.1c-1.4.8-1.9 1.4-1.9 2.9" fill="none" stroke="#3e3e3e" stroke-width="2.6"/><circle cx="11.1" cy="17.3" r="1.6" fill="#3e3e3e"/></svg>
<svg style="left:2256px;top:202px;" width="24" height="24" viewBox="0 0 24 24"><g stroke="#c4c4c4" stroke-width="2.2" fill="none"><path d="M1.9 7H11.9M18 7H21.9M1.9 17H6M12 17H21.9"/><path d="M16 4V10M10 14V20.1" stroke-width="4" stroke-linecap="round"/></g></svg>
<svg style="left:2304px;top:204px;" width="8" height="20" viewBox="0 0 8 20"><circle cx="4" cy="2.5" r="2.55" fill="#c4c4c4"/><circle cx="4" cy="10.0" r="2.55" fill="#c4c4c4"/><circle cx="4" cy="17.5" r="2.55" fill="#c4c4c4"/></svg>
<span style="left:1793.70px;top:247px;line-height:31px;font-size:25px;color:#d6d6d6;letter-spacing:0.971px;-webkit-text-stroke:0.75px #d6d6d6;">Position</span>
<span style="left:1957.20px;top:247px;line-height:31px;font-size:25px;color:#d6d6d6;letter-spacing:0.000px;-webkit-text-stroke:0.75px #d6d6d6;">X</span>
<div style="left:1978px;top:244px;width:95px;height:36px;background:#2a2a2a;border:2px solid #212121;border-top-color:#0e0e0e;border-radius:6px;box-sizing:border-box;"></div>
<span style="left:2083.70px;top:247px;line-height:31px;font-size:25px;color:#d6d6d6;letter-spacing:0.000px;-webkit-text-stroke:0.75px #d6d6d6;">Y</span>
<div style="left:2105px;top:244px;width:95px;height:36px;background:#2a2a2a;border:2px solid #212121;border-top-color:#0e0e0e;border-radius:6px;box-sizing:border-box;"></div>
<span style="left:2209.95px;top:247px;line-height:31px;font-size:25px;color:#d6d6d6;letter-spacing:0.000px;-webkit-text-stroke:0.75px #d6d6d6;">Z</span>
<div style="left:2231px;top:244px;width:95px;height:36px;background:#2a2a2a;border:2px solid #212121;border-top-color:#0e0e0e;border-radius:6px;box-sizing:border-box;"></div>
<span style="left:1983.95px;top:247px;line-height:31px;font-size:25px;color:#e4e4e4;letter-spacing:0.700px;-webkit-text-stroke:0.75px #e4e4e4;">10.65</span>
<span style="left:2111.95px;top:247px;line-height:31px;font-size:25px;color:#e4e4e4;letter-spacing:0.000px;-webkit-text-stroke:0.75px #e4e4e4;">0</span>
<span style="left:2237.95px;top:247px;line-height:31px;font-size:25px;color:#e4e4e4;letter-spacing:0.000px;-webkit-text-stroke:0.75px #e4e4e4;">0</span>
<span style="left:1793.70px;top:287px;line-height:31px;font-size:25px;color:#d6d6d6;letter-spacing:0.864px;-webkit-text-stroke:0.75px #d6d6d6;">Rotation</span>
<span style="left:1957.20px;top:287px;line-height:31px;font-size:25px;color:#d6d6d6;letter-spacing:0.000px;-webkit-text-stroke:0.75px #d6d6d6;">X</span>
<div style="left:1978px;top:284px;width:95px;height:36px;background:#2a2a2a;border:2px solid #212121;border-top-color:#0e0e0e;border-radius:6px;box-sizing:border-box;"></div>
<span style="left:2083.70px;top:287px;line-height:31px;font-size:25px;color:#d6d6d6;letter-spacing:0.000px;-webkit-text-stroke:0.75px #d6d6d6;">Y</span>
<div style="left:2105px;top:284px;width:95px;height:36px;background:#2a2a2a;border:2px solid #212121;border-top-color:#0e0e0e;border-radius:6px;box-sizing:border-box;"></div>
<span style="left:2209.95px;top:287px;line-height:31px;font-size:25px;color:#d6d6d6;letter-spacing:0.000px;-webkit-text-stroke:0.75px #d6d6d6;">Z</span>
<div style="left:2231px;top:284px;width:95px;height:36px;background:#2a2a2a;border:2px solid #212121;border-top-color:#0e0e0e;border-radius:6px;box-sizing:border-box;"></div>
<span style="left:1984.70px;top:287px;line-height:31px;font-size:25px;color:#e4e4e4;letter-spacing:1.960px;-webkit-text-stroke:0.75px #e4e4e4;">-89.98</span>
<span style="left:2111.95px;top:287px;line-height:31px;font-size:25px;color:#e4e4e4;letter-spacing:0.000px;-webkit-text-stroke:0.75px #e4e4e4;">0</span>
<span style="left:2237.95px;top:287px;line-height:31px;font-size:25px;color:#e4e4e4;letter-spacing:0.000px;-webkit-text-stroke:0.75px #e4e4e4;">0</span>
<span style="left:1794.70px;top:327px;line-height:31px;font-size:25px;color:#d2d2d2;letter-spacing:0.137px;">Scale</span>
<span style="left:1957.20px;top:327px;line-height:31px;font-size:25px;color:#d2d2d2;letter-spacing:0.000px;">X</span>
<div style="left:1978px;top:324px;width:95px;height:36px;background:#2a2a2a;border:2px solid #212121;border-top-color:#0e0e0e;border-radius:6px;box-sizing:border-box;"></div>
<span style="left:2083.70px;top:327px;line-height:31px;font-size:25px;color:#d2d2d2;letter-spacing:0.000px;">Y</span>
<div style="left:2105px;top:324px;width:95px;height:36px;background:#2a2a2a;border:2px solid #212121;border-top-color:#0e0e0e;border-radius:6px;box-sizing:border-box;"></div>
<span style="left:2209.95px;top:327px;line-height:31px;font-size:25px;color:#d2d2d2;letter-spacing:0.000px;">Z</span>
<div style="left:2231px;top:324px;width:95px;height:36px;background:#2a2a2a;border:2px solid #212121;border-top-color:#0e0e0e;border-radius:6px;box-sizing:border-box;"></div>
<span style="left:1984.95px;top:327px;line-height:31px;font-size:25px;color:#d8d8d8;letter-spacing:0.000px;">1</span>
<span style="left:2111.45px;top:327px;line-height:31px;font-size:25px;color:#d8d8d8;letter-spacing:0.000px;">1</span>
<span style="left:2237.45px;top:327px;line-height:31px;font-size:25px;color:#d8d8d8;letter-spacing:0.000px;">1</span>
<div style="left:1756px;top:379px;width:578px;height:2px;background:#1a1a1a;"></div>
<div style="left:1756px;top:381px;width:578px;height:40px;background:#3e3e3e;"></div>
<div style="left:1756px;top:421px;width:578px;height:2px;background:#303030;"></div>
<svg style="left:1768.0px;top:393.5px;" width="18" height="15.6" viewBox="0 0 18 15.6"><path d="M0 0H18L9.0 15.6Z" fill="#707070"/></svg>
<svg style="left:1797.5px;top:385.5px;" width="27.5" height="27.5" viewBox="0 0 27.5 27.5"><g fill="none" stroke="#80d8ff" stroke-width="2"><rect x="1.5" y="1.5" width="24.5" height="24.5" rx="1.5"/><path d="M9.666666666666666 1.5V26.0M17.833333333333332 1.5V26.0M1.5 9.666666666666666H26.0M1.5 17.833333333333332H26.0"/></g></svg>
<span style="left:1876.45px;top:385px;line-height:31px;font-size:25px;color:#d6d6d6;letter-spacing:0.807px;-webkit-text-stroke:0.75px #d6d6d6;width:327.55px;overflow:hidden;">Cube Sphere-High Poly-49K</span>
<svg style="left:2217px;top:390px;" width="22" height="22" viewBox="0 0 22 22"><circle cx="11" cy="11" r="10.1" fill="#c4c4c4"/><path d="M7.6 8.6a3.6 3.6 0 1 1 5.4 3.1c-1.4.8-1.9 1.4-1.9 2.9" fill="none" stroke="#3e3e3e" stroke-width="2.6"/><circle cx="11.1" cy="17.3" r="1.6" fill="#3e3e3e"/></svg>
<svg style="left:2256px;top:389px;" width="24" height="24" viewBox="0 0 24 24"><g stroke="#c4c4c4" stroke-width="2.2" fill="none"><path d="M1.9 7H11.9M18 7H21.9M1.9 17H6M12 17H21.9"/><path d="M16 4V10M10 14V20.1" stroke-width="4" stroke-linecap="round"/></g></svg>
<svg style="left:2304px;top:391px;" width="8" height="20" viewBox="0 0 8 20"><circle cx="4" cy="2.5" r="2.55" fill="#c4c4c4"/><circle cx="4" cy="10.0" r="2.55" fill="#c4c4c4"/><circle cx="4" cy="17.5" r="2.55" fill="#c4c4c4"/></svg>
<span style="left:1793.70px;top:433px;line-height:31px;font-size:25px;color:#c8c8c8;letter-spacing:0.517px;">Mesh</span>
<div style="left:2037px;top:431px;width:288px;height:36px;background:#2a2a2a;border:2px solid #212121;border-top-color:#0e0e0e;border-radius:6px;box-sizing:border-box;"></div>
<div style="left:2288px;top:433px;width:35px;height:32px;background:#373737;border-radius:0 4px 4px 0;"></div>
<svg style="left:2043px;top:438px;" width="21" height="21" viewBox="0 0 21 21"><g fill="none" stroke="#80d8ff" stroke-width="2"><rect x="1.5" y="1.5" width="18" height="18" rx="1.5"/><path d="M7.5 1.5V19.5M13.5 1.5V19.5M1.5 7.5H19.5M1.5 13.5H19.5"/></g></svg>
<span style="left:2068.95px;top:435px;line-height:31px;font-size:25px;color:#e0e0e0;letter-spacing:0.070px;width:217.55px;overflow:hidden;">CubeSphere-HighPoly</span>
<svg style="left:2295px;top:438px;" width="22" height="22" viewBox="0 0 22 22"><circle cx="11" cy="11" r="9" fill="none" stroke="#c4c4c4" stroke-width="2"/><circle cx="11" cy="11" r="3.4" fill="#c4c4c4"/></svg>
<div style="left:1756px;top:484px;width:578px;height:2px;background:#1a1a1a;"></div>
<div style="left:1756px;top:486px;width:578px;height:40px;background:#3e3e3e;"></div>
<div style="left:1756px;top:526px;width:578px;height:2px;background:#303030;"></div>
<svg style="left:1768.0px;top:498.5px;" width="18" height="15.6" viewBox="0 0 18 15.6"><path d="M0 0H18L9.0 15.6Z" fill="#707070"/></svg>
<svg style="left:1797px;top:491px;" width="31" height="31" viewBox="0 0 31 31"><g fill="none" stroke="#80d8ff" stroke-width="2"><rect x="2" y="1.8" width="24.2" height="25.2" rx="2"/><path d="M10.4 1.8V27M18.4 1.8V27M2 10.4H26.2M2 18.6H26.2"/></g><path d="M8.8 22.6C13.6 14.2 24.6 14.2 29.4 22.6C24.6 30.4 13.6 30.4 8.8 22.6Z" fill="#c4c4c4" stroke="#3e3e3e" stroke-width="2.6" paint-order="stroke"/><circle cx="19.2" cy="22.4" r="3.9" fill="#3e3e3e"/></svg>
<div style="left:1836px;top:492px;width:28px;height:28px;background:#2a2a2a;border:2px solid #1e1e1e;border-top-color:#0e0e0e;border-radius:5px;box-sizing:border-box;"></div>
<svg style="left:1840px;top:497px;" width="20" height="18" viewBox="0 0 20 18"><path d="M2.7 9.9L6.9 14.3 17.3 3.5" fill="none" stroke="#f0f0f0" stroke-width="2.7"/></svg>
<span style="left:1875.70px;top:492px;line-height:31px;font-size:25px;color:#d6d6d6;letter-spacing:0.442px;-webkit-text-stroke:0.75px #d6d6d6;">Mesh Renderer</span>
<svg style="left:2217px;top:495px;" width="22" height="22" viewBox="0 0 22 22"><circle cx="11" cy="11" r="10.1" fill="#c4c4c4"/><path d="M7.6 8.6a3.6 3.6 0 1 1 5.4 3.1c-1.4.8-1.9 1.4-1.9 2.9" fill="none" stroke="#3e3e3e" stroke-width="2.6"/><circle cx="11.1" cy="17.3" r="1.6" fill="#3e3e3e"/></svg>
<svg style="left:2256px;top:494px;" width="24" height="24" viewBox="0 0 24 24"><g stroke="#c4c4c4" stroke-width="2.2" fill="none"><path d="M1.9 7H11.9M18 7H21.9M1.9 17H6M12 17H21.9"/><path d="M16 4V10M10 14V20.1" stroke-width="4" stroke-linecap="round"/></g></svg>
<svg style="left:2304px;top:496px;" width="8" height="20" viewBox="0 0 8 20"><circle cx="4" cy="2.5" r="2.55" fill="#c4c4c4"/><circle cx="4" cy="10.0" r="2.55" fill="#c4c4c4"/><circle cx="4" cy="17.5" r="2.55" fill="#c4c4c4"/></svg>
<svg style="left:1768.0px;top:546.5px;" width="18" height="15.6" viewBox="0 0 18 15.6"><path d="M0 0H18L9.0 15.6Z" fill="#707070"/></svg>
<span style="left:1795.70px;top:539px;line-height:31px;font-size:25px;color:#d6d6d6;letter-spacing:0.944px;-webkit-text-stroke:0.75px #d6d6d6;">Materials</span>
<div style="left:2231px;top:536px;width:94px;height:36px;background:#2a2a2a;border:2px solid #212121;border-top-color:#0e0e0e;border-radius:6px;box-sizing:border-box;"></div>
<span style="left:2235.95px;top:539px;line-height:31px;font-size:25px;color:#d8d8d8;letter-spacing:0.000px;">1</span>
<div style="left:1793px;top:578px;width:533px;height:54px;background:#414141;border:2px solid #242424;border-radius:6px;box-sizing:border-box;"></div>
<div style="left:1804px;top:600px;width:20px;height:2px;background:#5e5e5e;"></div>
<div style="left:1804px;top:606px;width:20px;height:2px;background:#5e5e5e;"></div>
<span style="left:1851.70px;top:589px;line-height:31px;font-size:25px;color:#c8c8c8;letter-spacing:-0.181px;">Element 0</span>
<div style="left:1984px;top:586px;width:327px;height:36px;background:#2a2a2a;border:2px solid #212121;border-top-color:#0e0e0e;border-radius:6px;box-sizing:border-box;"></div>
<div style="left:2274px;top:588px;width:35px;height:32px;background:#373737;border-radius:0 4px 4px 0;"></div>
<svg style="left:1990px;top:593px;" width="22" height="22" viewBox="0 0 22 22"><circle cx="11" cy="11" r="9.4" fill="#2a2a2a" stroke="#7cd4fb" stroke-width="1.8"/><circle cx="9.2" cy="9.4" r="6.4" fill="#7cd4fb"/></svg>
<span style="left:2016.20px;top:590px;line-height:31px;font-size:25px;color:#e0e0e0;letter-spacing:-0.325px;">No Name</span>
<svg style="left:2281px;top:593px;" width="22" height="22" viewBox="0 0 22 22"><circle cx="11" cy="11" r="9" fill="none" stroke="#c4c4c4" stroke-width="2"/><circle cx="11" cy="11" r="3.4" fill="#c4c4c4"/></svg>
<div style="left:2191px;top:630px;width:114px;height:40px;background:#414141;border:2px solid #242424;border-top:none;border-radius:0 0 6px 6px;box-sizing:border-box;"></div>
<svg style="left:2211px;top:636px;" width="24" height="24" viewBox="0 0 24 24"><path d="M12 3.9V20.3M3.9 12.1H20.1" stroke="#c8c8c8" stroke-width="3.8" stroke-linecap="round"/></svg>
<svg style="left:2261px;top:640px;" width="24" height="16" viewBox="0 0 24 16"><path d="M5.9 8.1H18.1" stroke="#8c8c8c" stroke-width="3.8" stroke-linecap="round"/></svg>
<svg style="left:1768.0px;top:686.5px;" width="18" height="15.6" viewBox="0 0 18 15.6"><path d="M0 0H18L9.0 15.6Z" fill="#707070"/></svg>
<span style="left:1795.70px;top:679px;line-height:31px;font-size:25px;color:#d6d6d6;letter-spacing:1.150px;-webkit-text-stroke:0.75px #d6d6d6;">Lighting</span>
<span style="left:1824.45px;top:719px;line-height:31px;font-size:25px;color:#c8c8c8;letter-spacing:0.050px;">Cast Shadows</span>
<div style="left:2037px;top:717px;width:288px;height:34px;background:#515151;border:1px solid #303030;border-bottom:1.5px solid #242424;border-radius:6px;box-sizing:border-box;"></div>
<svg style="left:2299.0px;top:730.0px;" width="14" height="9" viewBox="0 0 14 9"><path d="M0 0H14L7.0 9Z" fill="#c4c4c4"/></svg>
<span style="left:2044.70px;top:718px;line-height:31px;font-size:25px;color:#e4e4e4;letter-spacing:-1.700px;">On</span>
<span style="left:1824.45px;top:759px;line-height:31px;font-size:25px;color:#c8c8c8;letter-spacing:0.059px;width:206.55px;overflow:hidden;">Contribute Global Illumination</span>
<div style="left:2037px;top:760px;width:28px;height:28px;background:#2a2a2a;border:2px solid #1e1e1e;border-top-color:#0e0e0e;border-radius:5px;box-sizing:border-box;"></div>
<span style="left:1823.70px;top:799px;line-height:31px;font-size:25px;color:#7e7e7e;letter-spacing:-0.025px;width:207.30px;overflow:hidden;">Receive Global Illumination</span>
<div style="left:2037px;top:797px;width:288px;height:34px;background:#444444;border:1px solid #3a3a3a;border-bottom:1.5px solid #2c2c2c;border-radius:6px;box-sizing:border-box;"></div>
<svg style="left:2299.0px;top:810.0px;" width="14" height="9" viewBox="0 0 14 9"><path d="M0 0H14L7.0 9Z" fill="#7e7e7e"/></svg>
<span style="left:2043.70px;top:798px;line-height:31px;font-size:25px;color:#8a8a8a;letter-spacing:0.073px;">Light Probes</span>
<svg style="left:1768.0px;top:846.5px;" width="18" height="15.6" viewBox="0 0 18 15.6"><path d="M0 0H18L9.0 15.6Z" fill="#707070"/></svg>
<span style="left:1795.70px;top:839px;line-height:31px;font-size:25px;color:#d6d6d6;letter-spacing:0.760px;-webkit-text-stroke:0.75px #d6d6d6;">Probes</span>
<span style="left:1823.70px;top:879px;line-height:31px;font-size:25px;color:#c8c8c8;letter-spacing:0.073px;">Light Probes</span>
<div style="left:2037px;top:877px;width:288px;height:34px;background:#515151;border:1px solid #303030;border-bottom:1.5px solid #242424;border-radius:6px;box-sizing:border-box;"></div>
<svg style="left:2299.0px;top:890.0px;" width="14" height="9" viewBox="0 0 14 9"><path d="M0 0H14L7.0 9Z" fill="#c4c4c4"/></svg>
<span style="left:2043.70px;top:878px;line-height:31px;font-size:25px;color:#e4e4e4;letter-spacing:-0.132px;">Blend Probes</span>
<span style="left:1823.70px;top:919px;line-height:31px;font-size:25px;color:#c8c8c8;letter-spacing:0.081px;">Reflection Probes</span>
<div style="left:2037px;top:917px;width:288px;height:34px;background:#515151;border:1px solid #303030;border-bottom:1.5px solid #242424;border-radius:6px;box-sizing:border-box;"></div>
<svg style="left:2299.0px;top:930.0px;" width="14" height="9" viewBox="0 0 14 9"><path d="M0 0H14L7.0 9Z" fill="#c4c4c4"/></svg>
<span style="left:2043.70px;top:918px;line-height:31px;font-size:25px;color:#e4e4e4;letter-spacing:-0.132px;">Blend Probes</span>
<span style="left:1825.70px;top:959px;line-height:31px;font-size:25px;color:#c8c8c8;letter-spacing:-0.086px;">Anchor Override</span>
<div style="left:2037px;top:956px;width:288px;height:36px;background:#2a2a2a;border:2px solid #212121;border-top-color:#0e0e0e;border-radius:6px;box-sizing:border-box;"></div>
<div style="left:2288px;top:958px;width:35px;height:32px;background:#373737;border-radius:0 4px 4px 0;"></div>
<span style="left:2041.70px;top:959px;line-height:31px;font-size:25px;color:#e0e0e0;letter-spacing:0.087px;">None (Transform)</span>
<svg style="left:2295px;top:963px;" width="22" height="22" viewBox="0 0 22 22"><circle cx="11" cy="11" r="9" fill="none" stroke="#c4c4c4" stroke-width="2"/><circle cx="11" cy="11" r="3.4" fill="#c4c4c4"/></svg>
<svg style="left:1768.0px;top:1006.5px;" width="18" height="15.6" viewBox="0 0 18 15.6"><path d="M0 0H18L9.0 15.6Z" fill="#707070"/></svg>
<span style="left:1797.70px;top:999px;line-height:31px;font-size:25px;color:#d6d6d6;letter-spacing:0.919px;-webkit-text-stroke:0.75px #d6d6d6;">Additional Settings</span>
<span style="left:1823.70px;top:1039px;line-height:31px;font-size:25px;color:#c8c8c8;letter-spacing:0.170px;width:207.30px;overflow:hidden;">Dynamic Occlusion</span>
<div style="left:2037px;top:1040px;width:28px;height:28px;background:#2a2a2a;border:2px solid #1e1e1e;border-top-color:#0e0e0e;border-radius:5px;box-sizing:border-box;"></div>
<svg style="left:2041px;top:1045px;" width="20" height="18" viewBox="0 0 20 18"><path d="M2.7 9.9L6.9 14.3 17.3 3.5" fill="none" stroke="#f0f0f0" stroke-width="2.7"/></svg>
<span style="left:1823.70px;top:1079px;line-height:31px;font-size:25px;color:#c8c8c8;letter-spacing:0.021px;width:207.30px;overflow:hidden;">Rendering Layer Mask</span>
<div style="left:2037px;top:1077px;width:288px;height:34px;background:#515151;border:1px solid #303030;border-bottom:1.5px solid #242424;border-radius:6px;box-sizing:border-box;"></div>
<svg style="left:2299.0px;top:1090.0px;" width="14" height="9" viewBox="0 0 14 9"><path d="M0 0H14L7.0 9Z" fill="#c4c4c4"/></svg>
<span style="left:2043.70px;top:1078px;line-height:31px;font-size:25px;color:#e4e4e4;letter-spacing:-0.290px;">Layer1</span>
<div style="left:1756px;top:1128px;width:578px;height:2px;background:#1a1a1a;"></div>
<div style="left:1756px;top:1130px;width:578px;height:108px;background:#3c3c3c;"></div>
<svg style="left:1788px;top:1142px;" width="64" height="64" viewBox="0 0 64 64"><defs><radialGradient id="ms" cx=".38" cy=".32" r=".72"><stop offset="0" stop-color="#dcdcdc"/><stop offset=".45" stop-color="#b2b3b8"/><stop offset=".82" stop-color="#787c86"/><stop offset="1" stop-color="#4a5266"/></radialGradient></defs><rect width="64" height="64" fill="#0a0a0a"/><circle cx="32" cy="32" r="29.4" fill="url(#ms)"/></svg>
<span style="left:1867.70px;top:1141px;line-height:32px;font-size:26px;color:#9c9c9c;letter-spacing:0.959px;">No Name (Material)</span>
<svg style="left:2275px;top:1145px;" width="22" height="22" viewBox="0 0 22 22"><circle cx="11" cy="11" r="10.1" fill="#c4c4c4"/><path d="M7.6 8.6a3.6 3.6 0 1 1 5.4 3.1c-1.4.8-1.9 1.4-1.9 2.9" fill="none" stroke="#3e3e3e" stroke-width="2.6"/><circle cx="11.1" cy="17.3" r="1.6" fill="#3e3e3e"/></svg>
<svg style="left:2314px;top:1146px;" width="8" height="20" viewBox="0 0 8 20"><circle cx="4" cy="2.5" r="2.55" fill="#c4c4c4"/><circle cx="4" cy="10.0" r="2.55" fill="#c4c4c4"/><circle cx="4" cy="17.5" r="2.55" fill="#c4c4c4"/></svg>
<svg style="left:1769.5px;top:1208.0px;" width="15" height="18" viewBox="0 0 15 18"><path d="M0 0V18L15 9.0Z" fill="#7a7a7a"/></svg>
<span style="left:1862.70px;top:1190px;line-height:31px;font-size:25px;color:#7e7e7e;letter-spacing:-0.190px;">Shader</span>
<div style="left:1965px;top:1187px;width:265px;height:34px;background:#444444;border:1px solid #3a3a3a;border-bottom:1.5px solid #2c2c2c;border-radius:6px;box-sizing:border-box;"></div>
<svg style="left:2205.0px;top:1200.0px;" width="14" height="9" viewBox="0 0 14 9"><path d="M0 0H14L7.0 9Z" fill="#7e7e7e"/></svg>
<span style="left:1971.95px;top:1190px;line-height:31px;font-size:25px;color:#8a8a8a;letter-spacing:0.017px;width:228.05px;overflow:hidden;">Universal Render Pipeline/Lit</span>
<div style="left:2240px;top:1187px;width:85px;height:34px;background:#464646;border:1px solid #3a3a3a;border-bottom:1.5px solid #2c2c2c;border-radius:6px;box-sizing:border-box;"></div>
<span style="left:2251.70px;top:1190px;line-height:31px;font-size:25px;color:#8a8a8a;letter-spacing:-0.408px;">Edit...</span>
<div style="left:1756px;top:1238px;width:578px;height:2px;background:#1a1a1a;"></div>
<div style="left:1756px;top:1240px;width:578px;height:20px;background:#383838;"></div>
<div style="left:1756px;top:1260px;width:578px;height:2px;background:#1a1a1a;"></div>
<div style="left:1756px;top:1262px;width:578px;height:2px;background:#383838;"></div>
</body></html>
